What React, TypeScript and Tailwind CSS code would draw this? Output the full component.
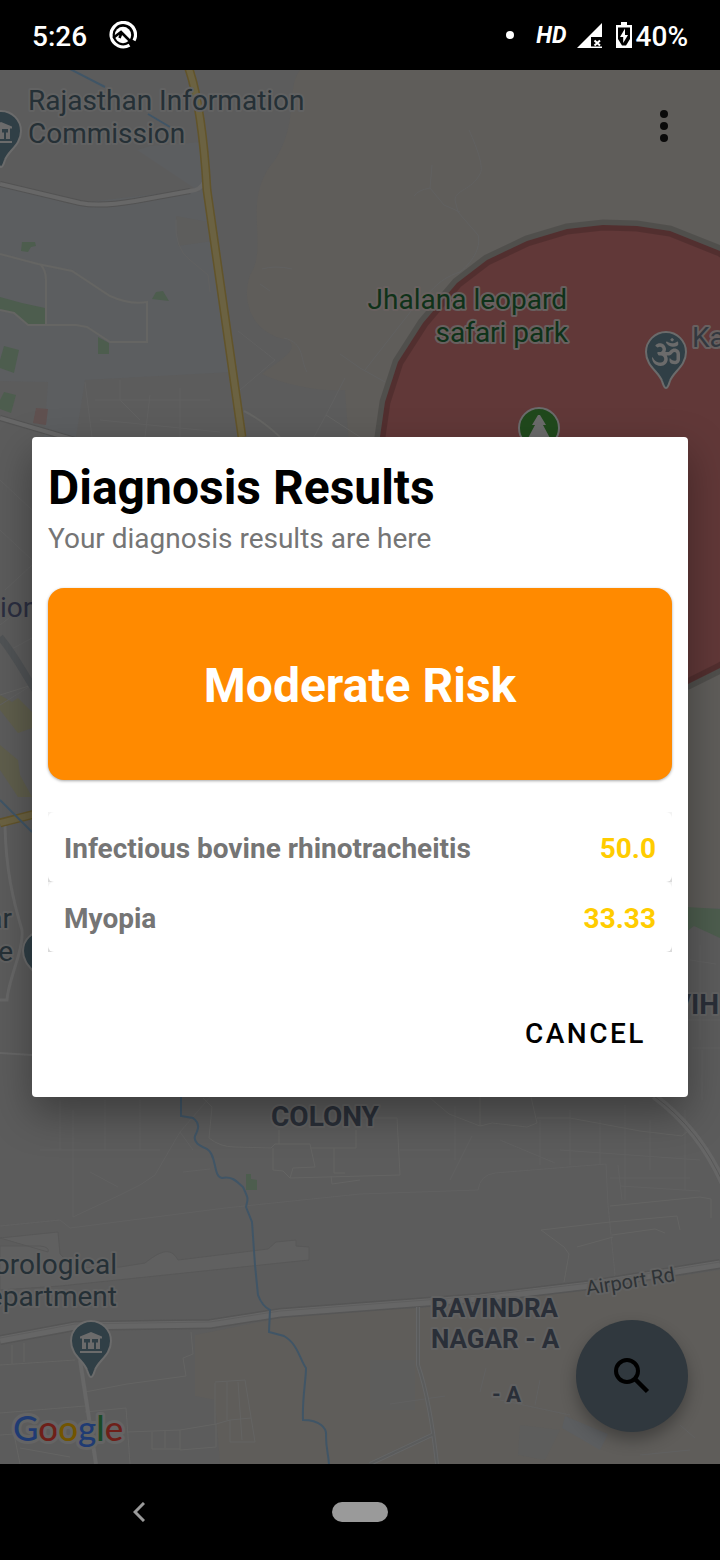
import React from "react";
import { FaOm } from "react-icons/fa";

const results = [
  { name: "Infectious bovine rhinotracheitis", score: "50.0" },
  { name: "Myopia", score: "33.33" },
];

const PIN = "M0 28 C-2 28 -2.5 25 -4 21 C-7 12 -20 6 -20 -8 A20 20 0 0 1 20 -8 C20 6 7 12 4 21 C2.500 25 2 28 0 28Z";

function MuseumPin({ x, y }: { x: number; y: number }) {
  return (
    <g transform={`translate(${x} ${y})`}>
      <path d={PIN} fill="#303f46" stroke="#6b6b6b" strokeWidth="2" />
      <path
        d="M0 -17 L11 -12.500 V-10.500 H9 V0 H-9 V-10.500 H-11 V-12.500Z M-11 2 H11 V4 H-11Z"
        fill="#6b6b6b"
      />
      <path d="M-7 -10 H-1 V-6.500 H-3 V0 H-5 V-6.500 H-7Z M1 -10 H7 V-6.500 H5 V0 H3 V-6.500 H1Z" fill="#303f46" />
    </g>
  );
}

function CityMap() {
  return (
    <svg
      className="absolute inset-0 h-full w-full"
      viewBox="0 70 720 1394"
      preserveAspectRatio="xMidYMid slice"
      fontFamily="Roboto, sans-serif"
      aria-label="Map"
    >
      <rect y="70" width="720" height="1394" fill="#5c5c5c" />

      {/* land cover */}
      <g fill="#5f5d5a">
        <path d="M300 70 H720 V460 H350 L345 390 C320 392 285 385 262 374 C280 360 300 350 288 340 C255 335 240 305 250 275 C270 245 240 200 275 160 C300 120 285 90 300 70Z" />
        <path d="M686 650 H720 V908 H686Z" />
        <path d="M195 1335 L310 1312 L420 1308 L570 1292 L720 1270 V1464 H220 L215 1400 L195 1396Z" />
      </g>
      <g fill="#5c5e60">
        <path d="M0 184 L70 204 L190 190 L200 192 L137 150 L150 146 L202 142 L210 190 L232 372 L85 380 L76 437 H44 L48 382 L0 381Z" />
        <path d="M565 1416 L608 1434 L600 1450 L562 1428Z" />
      </g>
      <g fill="#5d5d5c">
        <path d="M176 216 L209 222 L213 241 L178 246Z" />
        <path d="M370 1360 H415 V1410 H370Z M520 1425 L560 1430 L545 1460 L518 1455Z" />
      </g>
      <path d="M36 408 L48 409 L46 425 L33 423Z" fill="#605150" />
      <path
        d="M0 695 L12 702 L18 698 L32 712 V728 L18 733 L0 710Z M0 745 L18 760 L20 775 L32 797 H18 L0 770Z"
        fill="#5f5e4c"
      />
      <g fill="#4d5d4e">
        <path d="M22 242 L35 242 L36 246 L31 247 L28 252 L21 251Z" />
        <path d="M0 297 L22 303 L45 308 V325 H28 L15 314 L0 310Z" />
        <path d="M152 299 L156 292 L163 291 L169 301Z" />
        <path d="M98 337 L109 343 L109 354 H98Z" />
        <path d="M4 346 L19 350 L14 373 L0 368 V360Z" />
        <path d="M4 392 L16 395 L11 413 L0 409 V400Z" />
        <path d="M246 1174 H251 V1179 L257 1180 V1190 H246Z" />
        <path d="M686 907 L720 909 V938 L694 926 L686 932Z" />
      </g>

      {/* airfield */}
      <path
        d="M0 1238 L58 1232 L60 1254 L75 1268 L120 1267 L145 1263 C158 1253 170 1245 178 1260 L268 1249 L276 1242 L296 1240 V1246 L309 1247 V1260 L60 1286 L0 1290 V1246 L40 1246 Q50 1247 48 1252Z"
        fill="#606060"
        stroke="#585858"
        strokeWidth="1"
      />

      {/* lanes */}
      <g fill="none" stroke="#616161" strokeWidth="1">
        <path d="M469 130 C478 150 484 168 480 174 C472 190 455 190 455 200 L458 212 L478 235 C481 245 475 260 460 272 C435 280 430 295 415 306 L365 370" />
        <path d="M432 165 L430 188 L444 205 L460 212 M430 188 Q418 190 414 196 M360 368 L385 382" />
        <path d="M176 220 Q174 248 190 260 L208 275 L210 292 M262 269 Q275 265 292 269 M260 284 L270 291" />
        <path d="M238 331 L275 360 L240 390 M284 338 C305 343 300 360 307 372 M340 354 L360 368 M314 437 L326 415 L345 378" />
        <path d="M85 382 L92 437 M120 380 V400 L140 420 M95 400 H210 M100 420 L220 432 M150 395 L145 437 M180 388 V437" />
        <path d="M0 480 L32 510 M0 530 L32 560 M0 625 L32 600 M10 650 L32 638 M0 705 L32 685 M5 590 L32 565" />
        <path d="M60 1100 V1150 M73 1110 V1217 L120 1195 L140 1185 L155 1175 L180 1132 L210 1097 M40 1150 H160 M105 1100 V1150 M140 1100 V1150 M90 1172 L118 1187 M180 1132 L193 1150 M183 1172 L210 1169" />
        <path d="M0 1226 L60 1220 L70 1228 L225 1208 L360 1194 L478 1190 Q480 1175 495 1173 L606 1164 L608 1205 L615 1275 L610 1281" />
        <path d="M600 1120 V1165 M625 1105 V1200 M650 1120 V1170 M685 1110 V1190 M560 1150 L700 1160 M610 1178 H690 M620 1186 L700 1191 M618 1165 L622 1200" />
        <path d="M690 960 L716 964 M700 945 V1040 M686 1020 H720 M692 1048 H720 M702 1050 V1100" />
        <path d="M486 1368 L480 1392 M540 1380 L535 1405 M500 1400 L570 1415 M390 1404 L445 1396 M680 1425 L695 1438 M640 1455 L690 1450" />
        <path d="M455 1106 V1160 M472 1136 L450 1180 M400 1150 H450 M500 1140 L555 1163 M540 1120 V1165 M570 1110 V1165" />
      </g>
      <g fill="none" stroke="#646463" strokeWidth="1">
        <path d="M0 1365 L75 1360 M12 1345 V1364 M24 1343 V1362 M85 1392 L127 1384 L186 1376 L183 1358 L193 1354 L191 1332 M85 1412 L126 1408 L130 1464 M0 1413 L85 1406 M127 1432 L180 1430 L216 1424 V1447 L180 1450 V1430 M152 1432 V1449 H180 M165 1430 V1448" />
        <path d="M215 1383 V1425 M215 1382 L245 1380 L255 1442 H230 V1420 M227 1382 V1420 M238 1382 L242 1440 M216 1424 L230 1420 L251 1418 M0 1435 L14 1434 L20 1464 M20 1448 L70 1457" />
        <path d="M203 1098 L212 1107 L209 1138 Q220 1147 235 1147 L271 1148 L275 1144 L310 1144 L315 1167 L293 1168 L290 1178 L283 1171 L273 1170 V1148 M279 1144 V1130 M290 1178 L400 1175 L397 1118 L360 1118 M310 1148 H356 V1130 M334 1148 V1173 L345 1173 M331 1176 L332 1184 L360 1180" />
        <path d="M430 1098 L449 1114 L480 1126 L492 1123 L527 1127 L537 1123 L531 1097 M537 1118 L570 1118 L640 1131 L682 1136 L688 1131 M480 1126 V1097" />
        <path d="M610 1206 L700 1197 L711 1199 V1218 M541 1230 L610 1222 L677 1216 L680 1230 M541 1230 L564 1247 L569 1254 L564 1282 M577 1247 L613 1237 M612 1235 L655 1229 L665 1233" />
        <path d="M0 695 L32 685 M326 415 L360 437" />
      </g>

      {/* streets */}
      <g fill="none" stroke="#656563" strokeWidth="2">
        <path d="M0 254 L38 264 L72 271 L110 296 Q130 305 147 302 V342 H110 L87 327 L76 325 H28 L14 313 L0 310 M40 264 Q46 270 46 280 V325" />
        <path d="M244 411 Q262 420 280 437" />
      </g>

      {/* main roads */}
      <g fill="none" stroke="#535353" strokeWidth="6">
        <path d="M0 184 L80 203 Q100 207 135 201 L190 191" />
        <path d="M0 418 L75 440" />
      </g>
      <g fill="none" stroke="#676767" strokeWidth="4">
        <path d="M0 184 L80 203 Q100 207 135 201 L190 191 Q201 190 204 182" />
        <path d="M0 418 L75 440" />
        <path d="M5 826 C6 870 13 900 22 930 C24 950 8 980 7 1000 H0" strokeWidth="3" />
        <path d="M0 1053 L32 1055" strokeWidth="2" />
        <path d="M80 1360 L96 1464" />
      </g>
      <path d="M0 637 C15 655 25 675 35 690" fill="none" stroke="#505355" strokeWidth="7" />
      <g fill="none">
        <path d="M0 1340 L75 1326 L210 1324 L280 1313 L480 1298 L590 1285 L720 1264" stroke="#565656" strokeWidth="10" />
        <path d="M0 1340 L75 1326 L210 1324 L280 1313 L480 1298 L590 1285 L720 1264" stroke="#666" strokeWidth="7" />
        <path d="M0 1338 L75 1324 L210 1322 L280 1311 L480 1296 L590 1283 L720 1262" stroke="#5f5f5f" strokeWidth="1" />
        <path d="M654 1096 Q700 1130 724 1185" stroke="#666" strokeWidth="7" />
        <path d="M654 1096 Q700 1130 724 1185" stroke="#585858" strokeWidth="1" />
        <path d="M418 1307 V1365 Q430 1400 437 1464 M434 1434 L370 1464" stroke="#656667" strokeWidth="4" />
        <path d="M418 1307 V1365 Q430 1400 437 1464 M434 1434 L370 1464" stroke="#5b5c5c" strokeWidth="2" />
      </g>
      <path d="M188 66 Q202 105 207 190 L242 437" fill="none" stroke="#62542a" strokeWidth="9" />
      <path d="M188 66 Q202 105 207 190 L242 437" fill="none" stroke="#6b6242" strokeWidth="6" />
      <path d="M0 823 L35 814" fill="none" stroke="#62542a" strokeWidth="9" />
      <path d="M0 823 L35 814" fill="none" stroke="#6b6242" strokeWidth="6" />

      {/* water */}
      <g fill="none" stroke="#405566" strokeWidth="2">
        <path d="M70 69 L105 87 M148 114 L170 127 M0 800 L32 832" />
        <path d="M181 1096 V1116 L193 1118 C201 1124 198 1130 195 1136 C193 1143 201 1146 207 1149 C217 1155 213 1177 222 1178 C233 1176 237 1182 243 1187 C249 1200 248 1198 246 1207 L252 1222 L255 1265 L258 1295 Q262 1306 270 1310 L269 1332 L284 1336 C298 1344 300 1360 306 1368 C306 1380 302 1400 303 1420 C320 1420 327 1428 326 1436 C326 1450 329 1456 329 1466" />
      </g>

      {/* risk zone */}
      <path
        d="M378 460 L380 437 L385 402 L398 362 L423 323 L457 283 L487 260 L527 241 L567 229 L603 225 L637 226 L670 231 L720 251 L760 277 L760 643 L720 668 L688 684 L640 694 L580 694 L500 667 L430 608 L388 530Z"
        fill="#613838"
      />
      <path
        d="M378 460 L380 437 L385 402 L398 362 L423 323 L457 283 L487 260 L527 241 L567 229 L603 225 L637 226 L670 231 L720 251 L760 277 M760 643 L720 668 L688 684 L640 694"
        fill="none"
        stroke="#000"
        strokeOpacity="0.15"
        strokeWidth="11"
      />

      {/* places */}
      <MuseumPin x={1} y={139} />
      <MuseumPin x={91} y={1349} />
      <MuseumPin x={43} y={959} />
      <g transform="translate(666 360)">
        <path d={PIN} fill="#303f46" stroke="#6b6b6b" strokeWidth="2" />
        <FaOm x={-14} y={-22} size={28} color="#6b6b6b" />
      </g>
      <g>
        <circle cx="539" cy="428" r="20" fill="#20491c" stroke="#6b6b6b" strokeWidth="2" />
        <path d="M538 415 H540 L546 425 H543 L551 440 H527 L535 425 H532Z" fill="#6b6b6b" />
      </g>

      <g fontSize="28" fill="#253036" stroke="#626262" strokeWidth="4" strokeLinejoin="round" paintOrder="stroke">
        <text x="28" y="110">Rajasthan Information</text>
        <text x="28" y="143">Commission</text>
        <text x="117" y="1274" textAnchor="end">orological</text>
        <text x="117" y="1306" textAnchor="end">epartment</text>
        <text x="12" y="928" textAnchor="end">ar</text>
        <text x="13" y="961" textAnchor="end">e</text>
      </g>
      <g fontSize="28" fill="#2b2e40" stroke="#5c5c5c" strokeWidth="4" strokeLinejoin="round" paintOrder="stroke">
        <text x="0" y="617">ion</text>
      </g>
      <g fontSize="28" stroke="#68605f" strokeWidth="4" strokeLinejoin="round" paintOrder="stroke">
        <text x="567" y="309" textAnchor="end" fill="#0f3219">Jhalana leopard</text>
        <text x="568" y="342" textAnchor="end" fill="#0f3219">safari park</text>
        <text x="692" y="347" fill="#32383f">Ka</text>
      </g>
      <g fontSize="26" fontWeight="700" fill="#2a2f38" stroke="#626262" strokeWidth="4" strokeLinejoin="round" paintOrder="stroke">
        <text x="325" y="1126" textAnchor="middle" fontSize="28">COLONY</text>
        <text x="719" y="1014" textAnchor="end" fontSize="28">VIH</text>
        <text x="431" y="1317">RAVINDRA</text>
        <text x="431" y="1348">NAGAR - A</text>
        <text x="492" y="1402" fontSize="22">- A</text>
      </g>
      <text
        transform="translate(587 1295) rotate(-9)"
        fontSize="20"
        fill="#2f3336"
        stroke="#626262"
        strokeWidth="4"
        strokeLinejoin="round"
        paintOrder="stroke"
      >
        Airport Rd
      </text>
      <text
        x="13"
        y="1441"
        fontFamily="Lato, sans-serif"
        fontSize="35"
        fontWeight="500"
        strokeLinejoin="round"
        stroke="#646464"
        strokeWidth="6"
        paintOrder="stroke"
      >
        <tspan fill="#1f3b73">G</tspan>
        <tspan fill="#6e1f19">o</tspan>
        <tspan fill="#735500">o</tspan>
        <tspan fill="#1f3b73">g</tspan>
        <tspan fill="#194a26">l</tspan>
        <tspan fill="#6e1f19">e</tspan>
      </text>
    </svg>
  );
}

function StatusBar() {
  return (
    <header className="flex h-[70px] shrink-0 items-center bg-black px-8 text-[28px] font-medium leading-8 text-white">
      <time className="pt-1">5:26</time>
      <svg className="ml-[22px] size-7" viewBox="0 0 28 28" aria-hidden="true">
        <path d="M20.500 24.200 A12.200 12.200 0 1 1 25 19.500" fill="none" stroke="#fff" strokeWidth="3.200" />
        <circle cx="14" cy="14" r="8.200" fill="#fff" />
        <path d="M4 17 L12 11 L26 25 M12.500 12 L10.500 17" fill="none" stroke="#000" strokeWidth="2.600" />
      </svg>
      <div className="ml-auto flex items-center">
        <span className="mr-[22px] size-2 rounded-full bg-white" />
        <span className="pt-px text-[23px] font-bold italic leading-8">HD</span>
        <svg className="ml-[10px] size-[25px]" viewBox="0 0 25 25" aria-hidden="true">
          <path d="M25 0 V14 H14 V25 H0Z" fill="#fff" />
          <path d="M14 24.500 H25 M17.500 17.500 L23 22.500 M23 17.500 L17.500 22.500" stroke="#fff" strokeWidth="2" />
        </svg>
        <svg className="ml-[14px] h-[26px] w-4" viewBox="0 0 16 26" aria-hidden="true">
          <path d="M5 0 H11 V3 H16 V26 H0 V3 H5Z" fill="#fff" />
          <path d="M2 5.500 H14 V17 L10 23.500 H6 L2 17Z" fill="#000" />
          <path d="M9 6.500 L4 15 H7.200 V21 L12 13 H9Z" fill="#fff" />
        </svg>
        <span className="ml-1 pt-1">40%</span>
      </div>
    </header>
  );
}

function ResultsDialog() {
  return (
    <section
      role="dialog"
      aria-labelledby="dialog-title"
      className="relative w-full rounded-[4px] bg-white px-4 pb-[27px] pt-[17px] shadow-[0_16px_40px_rgba(0,0,0,0.35)]"
    >
      <h1 id="dialog-title" className="text-[48px] font-bold leading-[68px] text-black">
        Diagnosis Results
      </h1>
      <p className="text-[28px] leading-[34px] text-[#757575]">Your diagnosis results are here</p>
      <div className="mt-8 flex h-48 items-center justify-center rounded-2xl bg-[#ff8a00] pt-1 text-[48px] font-bold text-white shadow-[0_1px_3px_rgba(0,0,0,0.35)]">
        Moderate Risk
      </div>
      <ul className="mt-8 text-[28px] font-bold leading-8">
        {results.map((result) => (
          <li key={result.name} className="bg-gradient-to-b from-[#f4f4f4] to-[#dadada]">
            <div className="flex h-[70px] items-center justify-between rounded-[6px] bg-white px-4 pt-1">
              <span className="text-[#757575]">{result.name}</span>
              <span className="text-[#ffcc00]">{result.score}</span>
            </div>
          </li>
        ))}
      </ul>
      <div className="mt-[46px] flex justify-end pr-2.5">
        <button type="button" className="h-[72px] px-4 text-[28px] font-medium uppercase leading-8 tracking-[0.09em] text-black">
          Cancel
        </button>
      </div>
    </section>
  );
}

export default function App() {
  return (
    <div className="flex min-h-screen flex-col bg-black font-[Roboto,sans-serif]">
      <StatusBar />
      <main className="relative flex flex-1 flex-col justify-center overflow-hidden px-8">
        <CityMap />
        <button type="button" aria-label="More options" className="absolute right-8 top-8 flex size-12 flex-col items-center justify-center gap-1">
          <span className="size-2 rounded-full bg-[#0a0a0a]" />
          <span className="size-2 rounded-full bg-[#0a0a0a]" />
          <span className="size-2 rounded-full bg-[#0a0a0a]" />
        </button>
        <button
          type="button"
          aria-label="Search"
          className="absolute bottom-8 right-8 flex size-28 items-center justify-center rounded-full bg-[#30383e] shadow-[0_8px_16px_rgba(0,0,0,0.3)]"
        >
          <svg className="size-12" viewBox="0 0 48 48" fill="none" stroke="#000" aria-hidden="true">
            <circle cx="19" cy="19" r="11" strokeWidth="4" />
            <path d="M27 27 L39.500 39.500" strokeWidth="4.500" />
          </svg>
        </button>
        <ResultsDialog />
      </main>
      <nav className="grid h-24 shrink-0 grid-cols-[278px_1fr_278px] items-center bg-black">
        <button type="button" aria-label="Back" className="flex justify-center">
          <svg className="h-5 w-3" viewBox="0 0 12 20" fill="none" stroke="#9a9a9a" strokeWidth="3" aria-hidden="true">
            <path d="M11 1 L2 10 L11 19" />
          </svg>
        </button>
        <button type="button" aria-label="Home" className="mx-auto h-5 w-14 rounded-full bg-[#9a9a9a]" />
      </nav>
    </div>
  );
}
